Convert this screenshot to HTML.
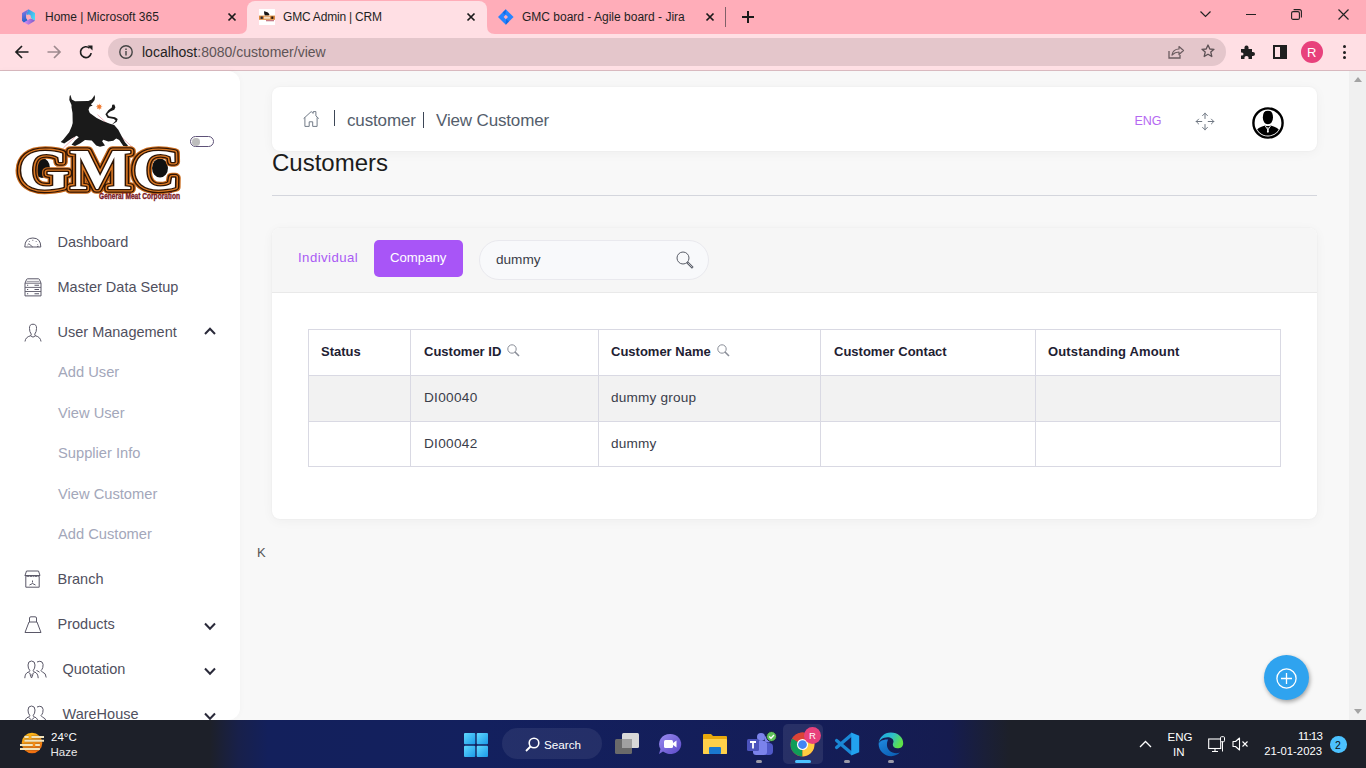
<!DOCTYPE html>
<html><head><meta charset="utf-8">
<style>
*{box-sizing:border-box;margin:0;padding:0}
html,body{width:1366px;height:768px;overflow:hidden;font-family:"Liberation Sans",sans-serif;background:#f8f8f8;position:relative}
.a{position:absolute;line-height:1;white-space:nowrap}
svg{position:absolute;overflow:visible}
#tabs{position:absolute;left:0;top:0;width:1366px;height:34px;background:#ffadb9}
#toolbar{position:absolute;left:0;top:34px;width:1366px;height:36px;background:#ffdfe4}
#tbline{position:absolute;left:0;top:70px;width:1366px;height:1px;background:#d9b9bf}
#omni{position:absolute;left:108px;top:38px;width:1118px;height:28px;border-radius:14px;background:#e4c6cb}
#main{position:absolute;left:0;top:71px;width:1366px;height:649px;background:#f8f8f8}
#sidebar{position:absolute;left:0;top:71px;width:240px;height:649px;background:#fff;border-radius:0 12px 12px 0;box-shadow:0 0 6px rgba(0,0,0,.03)}
#scroll{position:absolute;left:1349px;top:71px;width:17px;height:649px;background:#f0f0f0}
#taskbar{position:absolute;left:0;top:720px;width:1366px;height:48px;background:linear-gradient(90deg,#1d2029 0px,#1d2029 210px,#18204a 238px,#13205c 268px,#13205e 480px,#141d58 800px,#151c50 950px,#1a1f38 985px,#1d2029 1010px,#1d2029 1366px)}
.tabt{font-size:12px;color:#1f1f1f}
.menu{font-size:14.5px;color:#50505e}
.sub{font-size:14.7px;color:#a3a7ba}
.card{position:absolute;background:#fff;border-radius:8px;box-shadow:0 0 2px rgba(0,0,0,.05),0 2px 12px rgba(0,0,0,.045)}
.th{font-size:13px;font-weight:700;color:#1e2132}
.td{font-size:13.6px;color:#3a3d4a}
.tray{font-size:11.5px;color:#fff}
</style></head><body>
<!-- ===== Chrome tab strip ===== -->
<div id="tabs"></div>
<!-- active tab with feet -->
<div style="position:absolute;left:247px;top:1px;width:240px;height:33px;background:#ffdfe4;border-radius:8px 8px 0 0"></div>
<svg style="left:239px;top:26px" width="8" height="8"><path d="M0 8 Q8 8 8 0 L8 8Z" fill="#ffdfe4"/></svg>
<svg style="left:487px;top:26px" width="8" height="8"><path d="M8 8 Q0 8 0 0 L0 8Z" fill="#ffdfe4"/></svg>
<!-- tab 1 -->
<svg style="left:21px;top:9px" width="15" height="16" viewBox="0 0 15 16">
 <defs>
  <linearGradient id="m1" x1="0" y1="0" x2="1" y2="0.6"><stop offset="0" stop-color="#3a7ee0"/><stop offset="1" stop-color="#4ad8f2"/></linearGradient>
  <linearGradient id="m2" x1="0" y1="0" x2="0.3" y2="1"><stop offset="0" stop-color="#9a78e8"/><stop offset="1" stop-color="#1f64c8"/></linearGradient>
  <linearGradient id="m3" x1="0" y1="0" x2="1" y2="0"><stop offset="0" stop-color="#d890f5"/><stop offset="1" stop-color="#7a58c8"/></linearGradient>
 </defs>
 <path d="M7.5 0.3L14 4V11.8L11 10L9 7.5L5 5.2Z" fill="url(#m1)"/>
 <path d="M7.5 0.3L5 5.2L5.5 9.5L7 12L2.8 13.5L1 11.8V4Z" fill="url(#m2)"/>
 <path d="M14 11.8L7.5 15.7L2.8 13.5L6 11.5L9 9.5L11 10Z" fill="url(#m3)"/>
 <circle cx="7.5" cy="8" r="2.4" fill="#ffadb9"/>
</svg>
<div class="a tabt" style="left:45px;top:11px">Home | Microsoft 365</div>
<svg style="left:228px;top:13px" width="8" height="8"><path d="M0.5 0.5L7.5 7.5M7.5 0.5L0.5 7.5" stroke="#1a1a1a" stroke-width="1.7"/></svg>
<!-- tab 2 -->
<svg style="left:259px;top:9px" width="16" height="16" viewBox="0 0 16 16"><rect width="16" height="16" fill="#fff"/><path d="M5 2.2L6.2 2.5L9 3.5L10.5 5.5L9.5 6.5L5.8 6.5L5.2 4.5Z" fill="#151515"/><rect x="0" y="6.6" width="16" height="4.2" fill="#d9893e"/><rect x="1.6" y="7.5" width="2.2" height="2.4" fill="#2a2a30"/><rect x="5" y="7.6" width="6" height="2.2" fill="#f4dcc0"/><rect x="12.3" y="7.5" width="2" height="2.4" fill="#2a1a10"/><rect x="7" y="11.3" width="8" height="0.9" fill="#b04050"/></svg>
<div class="a tabt" style="left:283px;top:11px;letter-spacing:-0.2px">GMC Admin | CRM</div>
<svg style="left:467px;top:13px" width="8" height="8"><path d="M0.5 0.5L7.5 7.5M7.5 0.5L0.5 7.5" stroke="#1a1a1a" stroke-width="1.7"/></svg>
<!-- tab 3 -->
<svg style="left:498px;top:9px" width="16" height="16" viewBox="0 0 16 16"><path d="M7.8 0.2L15.6 8L7.8 15.8L0 8Z" fill="#2684ff"/><path d="M7.8 0.2L4.6 3.4L7.3 6L7.8 2.5Z" fill="#0a5ed8" opacity=".7"/><path d="M7.8 15.8L11 12.6L8.3 10L7.8 13.5Z" fill="#0a5ed8" opacity=".7"/><path d="M7.8 5.8L10 8L7.8 10.2L5.6 8Z" fill="#ffadb9"/></svg>
<div class="a tabt" style="left:522px;top:11px">GMC board - Agile board - Jira</div>
<svg style="left:706px;top:13px" width="8" height="8"><path d="M0.5 0.5L7.5 7.5M7.5 0.5L0.5 7.5" stroke="#1a1a1a" stroke-width="1.7"/></svg>
<div style="position:absolute;left:725px;top:7px;width:1px;height:20px;background:#806068"></div>
<svg style="left:742px;top:11px" width="12" height="12"><path d="M6 0V12M0 6H12" stroke="#1a1a1a" stroke-width="2"/></svg>
<!-- window controls -->
<svg style="left:1200px;top:11px" width="11" height="7"><path d="M0.5 0.5L5.5 5.5L10.5 0.5" stroke="#222" stroke-width="1.2" fill="none"/></svg>
<div style="position:absolute;left:1246px;top:14px;width:10px;height:1.2px;background:#222"></div>
<svg style="left:1291px;top:9px" width="11" height="11"><rect x="0.6" y="2.6" width="7.8" height="7.8" rx="1.5" stroke="#222" stroke-width="1.1" fill="none"/><path d="M2.6 0.6H8.4Q10.4 0.6 10.4 2.6V8.4" stroke="#222" stroke-width="1.1" fill="none"/></svg>
<svg style="left:1338px;top:9px" width="11" height="11"><path d="M0.5 0.5L10.5 10.5M10.5 0.5L0.5 10.5" stroke="#222" stroke-width="1.2"/></svg>

<!-- ===== Toolbar ===== -->
<div id="toolbar"></div>
<div id="tbline"></div>
<svg style="left:15px;top:45px" width="14" height="14"><path d="M13.5 7H1.5M7 1L1 7L7 13" stroke="#1f1f1f" stroke-width="1.7" fill="none"/></svg>
<svg style="left:47px;top:45px" width="14" height="14"><path d="M0.5 7H12.5M7 1L13 7L7 13" stroke="#9e8a8e" stroke-width="1.7" fill="none"/></svg>
<svg style="left:79px;top:45px" width="14" height="14"><path d="M12.2 8.2A5.4 5.4 0 1 1 10.6 3.2" stroke="#1f1f1f" stroke-width="1.7" fill="none"/><path d="M8.5 0.5H13.5V5.5Z" fill="#1f1f1f"/></svg>
<div id="omni"></div>
<svg style="left:119px;top:45px" width="14" height="14"><circle cx="7" cy="7" r="6.2" stroke="#444" stroke-width="1.4" fill="none"/><rect x="6.3" y="6" width="1.4" height="4.5" fill="#444"/><rect x="6.3" y="3.5" width="1.4" height="1.5" fill="#444"/></svg>
<div class="a" style="left:142px;top:45px;font-size:14px;color:#5e5456"><span style="color:#1f1f1f">localhost</span>:8080/customer/view</div>
<svg style="left:1168px;top:45px" width="16" height="14"><path d="M1 6V13H12V10" stroke="#6b5c60" stroke-width="1.3" fill="none"/><path d="M4 10Q5 4 11 4V1.5L15.5 5.5L11 9.5V7Q7 7 4 10Z" stroke="#6b5c60" stroke-width="1.2" fill="none" stroke-linejoin="round"/></svg>
<svg style="left:1201px;top:44px" width="14" height="14" viewBox="0 0 14 14"><path d="M7 1L8.8 5L13 5.3L9.8 8.1L10.8 12.5L7 10.2L3.2 12.5L4.2 8.1L1 5.3L5.2 5Z" stroke="#5c5054" stroke-width="1.3" fill="none" stroke-linejoin="round"/></svg>
<svg style="left:1240px;top:45px" width="15" height="14" viewBox="0 0 15 14"><path d="M1 4H4.5Q4 0.5 6.5 0.5Q9 0.5 8.5 4H12V7Q15 6.5 15 9Q15 11.5 12 11V14H8.5Q9 11 6.5 11Q4 11 4.5 14H1V10.5Q3.5 11 3.5 9Q3.5 7 1 7.5Z" fill="#1f1f1f"/></svg>
<svg style="left:1273px;top:45px" width="14" height="14"><rect x="1" y="1" width="12" height="12" stroke="#1f1f1f" stroke-width="2" fill="none"/><rect x="7" y="1" width="6" height="12" fill="#1f1f1f"/></svg>
<div style="position:absolute;left:1301px;top:41px;width:22px;height:22px;border-radius:11px;background:#e8417c"></div>
<div class="a" style="left:1307px;top:46px;font-size:13px;color:#fff">R</div>
<div style="position:absolute;left:1343px;top:45px;width:3px;height:3px;border-radius:2px;background:#1f1f1f"></div>
<div style="position:absolute;left:1343px;top:51px;width:3px;height:3px;border-radius:2px;background:#1f1f1f"></div>
<div style="position:absolute;left:1343px;top:56px;width:3px;height:3px;border-radius:2px;background:#1f1f1f"></div>

<!-- ===== Page ===== -->
<div id="main"></div>
<div id="scroll"></div>
<svg style="left:1354px;top:77px" width="8" height="5"><path d="M0 5L4 0L8 5Z" fill="#a3a3a3"/></svg>
<svg style="left:1354px;top:709px" width="8" height="5"><path d="M0 0L4 5L8 0Z" fill="#a3a3a3"/></svg>

<!-- sidebar -->
<div id="sidebar"></div>
<!-- logo -->
<svg style="left:0;top:80px" width="240" height="130" viewBox="0 80 240 130">
 <path d="M97.5 114.7L133.3 148M63.3 148L75 137" stroke="#e06a7a" stroke-width="0.5" fill="none"/>
 <path d="M71.5 105 L69.3 100 L69.6 96.5 L70.2 94.8 L70.9 96.5 L71.8 99.5 L75 101.2 L88.3 100.9 L91.6 99.5 L93.6 96.8 L94.3 95 L95 97 L94.6 100 L92.8 102.6 L90.8 104.2 L92.7 105.5 L89.6 106.8 L88.5 109.8 L89.8 113 L96.7 118 L103.3 121.3 L110 123.7 L114.2 125.1 L118.3 129.7 L121.7 136.3 L125 142.2 L127.9 145.5 L127.1 147 L123.3 145.9 L119.2 140.1 L116.2 138.4 L113.3 140.7 L108.3 141.5 L103.3 139.8 L102.1 141.3 L105 145.5 L100 146.8 L96.2 145.5 L91.7 140.5 L85 140.1 L80 143.4 L75 145.9 L71.5 144.8 L75 140.5 L78.8 137.3 L76.7 135.7 L71.7 138.4 L64.2 143.4 L60.7 142 L63.3 139.5 L69.2 132.2 L71.8 126.3 L72.7 123 L72.5 113 L71.5 107.3Z" fill="#1a1a1a"/>
 <path d="M111.7 124.7 L116.7 121.8 L117.7 119 L115 117.2 L108.8 116.3 L107.3 114 L110.2 111.5 L114.3 109.8 L115.4 107.3 L114.3 104.5 L112.2 104.8 L111.8 107.5 L108.3 110.2 L105.4 114.2 L107.5 117.8 L114 119 L115.7 120.7 L112.7 123.7Z" fill="#1a1a1a"/>
 <path d="M102.60 106.80 L100.68 107.41 L101.60 109.20 L99.81 108.28 L99.20 110.20 L98.59 108.28 L96.80 109.20 L97.72 107.41 L95.80 106.80 L97.72 106.19 L96.80 104.40 L98.59 105.32 L99.20 103.40 L99.81 105.32 L101.60 104.40 L100.68 106.19Z" fill="#f07a30"/>
 <ellipse cx="42" cy="168" rx="8" ry="10" fill="#111"/>
 <ellipse cx="160" cy="168" rx="8" ry="9.5" fill="#111"/>
 <path d="M84 188L90 170L93 188ZM108 188L113 170L116 188Z" fill="#111"/>
 <g font-family="Liberation Serif" font-weight="700" font-size="56" stroke-linejoin="round">
  <text x="18" y="189" textLength="162" lengthAdjust="spacingAndGlyphs" fill="none" stroke="#c96a1c" stroke-width="9.6">GMC</text>
  <text x="18" y="189" textLength="162" lengthAdjust="spacingAndGlyphs" fill="none" stroke="#2e1404" stroke-width="7.6">GMC</text>
  <text x="18" y="189" textLength="162" lengthAdjust="spacingAndGlyphs" fill="none" stroke="#dd7a24" stroke-width="5.2">GMC</text>
  <text x="18" y="189" textLength="162" lengthAdjust="spacingAndGlyphs" fill="none" stroke="#2e1404" stroke-width="2.6">GMC</text>
  <text x="18" y="189" textLength="162" lengthAdjust="spacingAndGlyphs" fill="#fff">GMC</text>
 </g>
 <text x="99" y="198.6" font-family="Liberation Sans" font-weight="700" font-size="8.6" textLength="81" lengthAdjust="spacingAndGlyphs" fill="#7a1520" stroke="#7a1520" stroke-width="0.35">General Meat Corporation</text>
</svg>
<!-- toggle -->
<div style="position:absolute;left:190px;top:136px;width:24px;height:11px;border-radius:6px;border:1.3px solid #5e5278;background:#fff"></div>
<div style="position:absolute;left:192px;top:138px;width:7.5px;height:7.5px;border-radius:50%;background:#bdbdbd"></div>
<!-- sidebar icons -->
<svg style="left:24px;top:237px" width="18" height="11" viewBox="0 0 18 11"><path d="M0.8 10H16.8Q16.8 1 8.8 1Q0.8 1 0.8 10Z" stroke="#5a5868" stroke-width="1" fill="none"/><path d="M8.8 10L4.5 6.5M3.5 8L4.5 7.5M5 4L5.6 4.8M8.8 2.8V3.8M12.5 4L12 4.8M14.2 8L13.4 7.6M13 9.5L14.5 9.5" stroke="#5a5868" stroke-width="0.9"/></svg>
<svg style="left:24px;top:278px" width="18" height="19" viewBox="0 0 18 19"><path d="M1 5.2L2.6 1.3Q2.9 0.8 3.8 0.8H14.2Q15.1 0.8 15.4 1.3L17 5.2V17.9H1Z" stroke="#5a5868" stroke-width="1" fill="none"/><path d="M1 5.2H17M1 9.4H17M1 13.5H17" stroke="#5a5868" stroke-width="0.9"/><path d="M2.8 3.4H15.2" stroke="#5a5868" stroke-width="0.6"/><path d="M3 7.3h1.2M3 11.5h1.2M3 15.7h1.2M10.5 7.3h4.5M10.5 11.5h4.5M10.5 15.7h4.5" stroke="#5a5868" stroke-width="1.1"/></svg>
<svg style="left:24px;top:323px" width="18" height="19" viewBox="0 0 18 19"><path d="M9 1.2Q5.2 1.2 5.5 5.5Q5.5 9 7.2 11Q7.5 12 6.5 12.8Q1.5 14 1 18.5M9 1.2Q12.8 1.2 12.5 5.5Q12.5 9 10.8 11Q10.5 12 11.5 12.8Q16.5 14 17 18.5M6.5 12.8Q9 15.5 11.5 12.8" stroke="#5a5868" stroke-width="1" fill="none"/></svg>
<svg style="left:204px;top:327px" width="12" height="8"><path d="M1 7L6 1.8L11 7" stroke="#2a2a3a" stroke-width="2" fill="none"/></svg>
<svg style="left:24px;top:570px" width="17" height="18" viewBox="0 0 17 18"><path d="M1 5.5L2.5 1H14.5L16 5.5Q15 7 13.5 6Q12 7 10.5 6Q9 7 8.5 6Q7 7 5.5 6Q4 7 2.8 6Q1.5 7 1 5.5Z" stroke="#5a5868" stroke-width="1" fill="none"/><path d="M1.8 6.5V17.2H15.2V6.5M1 5.5H16M5.5 15Q8.5 12 11.5 15M8.5 10.5V12.5" stroke="#5a5868" stroke-width="1" fill="none"/></svg>
<svg style="left:24px;top:616px" width="18" height="18" viewBox="0 0 18 18"><path d="M5.5 6V2Q5.5 0.8 7 0.8H11Q12.5 0.8 12.5 2V6M5 6H13L17 16.5H1Z" stroke="#5a5868" stroke-width="1" fill="none" stroke-linejoin="round"/></svg>
<svg style="left:204px;top:622px" width="12" height="9"><path d="M1 1.5L6 6.8L11 1.5" stroke="#2a2a3a" stroke-width="2" fill="none"/></svg>
<svg style="left:24px;top:660px" width="23" height="19" viewBox="0 0 23 19"><path d="M7.5 1Q4 1 4 5Q4 8.5 5.8 10.5Q6 11.5 4.5 12Q1 13 0.8 18.2M7.5 1Q11 1 11 5Q11 8.5 9.2 10.5Q9 11.5 10.5 12Q14 13 14.2 18.2M4.5 12.3L7.5 15L10.5 12.3M6 14.5L7.5 18M9 14.5L7.5 18" stroke="#5a5868" stroke-width="1" fill="none"/><path d="M13 2Q16 0.5 18 2Q19.8 4 18.8 7.5Q18.2 9.5 17 10.5Q17.3 11.5 18.5 12Q22 13 22.2 17.5M12.5 10.5Q14 11 15.5 12.2" stroke="#5a5868" stroke-width="1" fill="none"/></svg>
<svg style="left:204px;top:667px" width="12" height="9"><path d="M1 1.5L6 6.8L11 1.5" stroke="#2a2a3a" stroke-width="2" fill="none"/></svg>
<svg style="left:24px;top:705px" width="23" height="19" viewBox="0 0 23 19"><path d="M7.5 1Q4 1 4 5Q4 8.5 5.8 10.5Q6 11.5 4.5 12Q1 13 0.8 18.2M7.5 1Q11 1 11 5Q11 8.5 9.2 10.5Q9 11.5 10.5 12Q14 13 14.2 18.2M4.5 12.3L7.5 15L10.5 12.3" stroke="#5a5868" stroke-width="1" fill="none"/><path d="M13 2Q16 0.5 18 2Q19.8 4 18.8 7.5Q18.2 9.5 17 10.5Q17.3 11.5 18.5 12Q22 13 22.2 17.5" stroke="#5a5868" stroke-width="1" fill="none"/></svg>
<svg style="left:204px;top:712px" width="12" height="9"><path d="M1 1.5L6 6.8L11 1.5" stroke="#2a2a3a" stroke-width="2" fill="none"/></svg>
<div class="a menu" style="left:57.5px;top:234.7px">Dashboard</div>
<div class="a menu" style="left:57.5px;top:279.7px">Master Data Setup</div>
<div class="a menu" style="left:57.5px;top:324.7px">User Management</div>
<div class="a sub" style="left:58px;top:365.2px">Add User</div>
<div class="a sub" style="left:58px;top:406.4px">View User</div>
<div class="a sub" style="left:58px;top:446.2px">Supplier Info</div>
<div class="a sub" style="left:58px;top:486.6px">View Customer</div>
<div class="a sub" style="left:58px;top:526.6px">Add Customer</div>
<div class="a menu" style="left:57.5px;top:572.1px">Branch</div>
<div class="a menu" style="left:57.5px;top:616.5px">Products</div>
<div class="a menu" style="left:62.5px;top:661.7px">Quotation</div>
<div class="a menu" style="left:62.5px;top:706.7px">WareHouse</div>

<!-- header card -->
<div class="card" style="left:272px;top:87px;width:1045px;height:64px"></div>
<svg style="left:303px;top:111px" width="16" height="16" viewBox="0 0 16 16"><path d="M0.6 7.6L8.2 0.6L10.2 2.4V0.6H12.9V4.9L15.8 7.6M1.9 6.4V15.4H6.2V10.8H9.7V15.4H14.1V6.4" stroke="#737c88" stroke-width="1" fill="none"/></svg>
<div style="position:absolute;left:334px;top:110px;width:1.3px;height:16px;background:#3c4656"></div>
<div class="a" style="left:347px;top:112px;font-size:17px;letter-spacing:-0.15px;color:#545e6c">customer</div>
<div style="position:absolute;left:423px;top:112px;width:1.3px;height:16px;background:#3c4656"></div>
<div class="a" style="left:436px;top:112px;font-size:17px;letter-spacing:-0.15px;color:#545e6c">View Customer</div>
<div class="a" style="left:1134.5px;top:114.5px;font-size:12.5px;color:#b569f2">ENG</div>
<svg style="left:1195px;top:112px" width="20" height="19" viewBox="0 0 20 19"><path d="M10 1.2V6.5M10 12.5V17.8M1.2 9.5H6.8M13.2 9.5H18.8M7.6 3.6L10 1.2L12.4 3.6M7.6 15.4L10 17.8L12.4 15.4M3.6 7.1L1.2 9.5L3.6 11.9M16.4 7.1L18.8 9.5L16.4 11.9" stroke="#6f7782" stroke-width="1" fill="none" stroke-linecap="round" stroke-linejoin="round"/></svg>
<svg style="left:1252px;top:107px" width="32" height="32" viewBox="0 0 32 32"><defs><clipPath id="avc"><circle cx="16" cy="16" r="12.6"/></clipPath></defs><circle cx="16" cy="16" r="14.6" stroke="#000" stroke-width="2.4" fill="#fff"/><g clip-path="url(#avc)"><path d="M10.8 10.5Q10.8 3.6 15.9 3.6Q21 3.6 21 10.5Q21 13.5 19.5 15.5Q18.5 17.3 15.9 17.3Q13.3 17.3 12.3 15.5Q10.8 13.5 10.8 10.5Z" fill="#000"/><path d="M3 30Q3 21.5 9.5 19.8L13 18.6Q15.9 19.6 18.8 18.6L22.3 19.8Q28.8 21.5 28.8 30Z" fill="#000"/><path d="M13 18.6L15.9 22.8L18.8 18.6" stroke="#fff" stroke-width="0.9" fill="none"/><path d="M15.2 20.2H16.6L16.3 21.3L16.9 24.8L15.9 26L14.9 24.8L15.5 21.3Z" fill="#fff"/></g></svg>
<div class="a" style="left:272px;top:150.8px;font-size:24px;color:#1c1c1c">Customers</div>
<div style="position:absolute;left:272px;top:195px;width:1045px;height:1px;background:#d4d6dd"></div>

<!-- list card -->
<div class="card" style="left:272px;top:228px;width:1045px;height:291px;overflow:hidden">
  <div style="position:absolute;left:0;top:0;width:1045px;height:65px;background:#f6f6f6;border-bottom:1px solid #e9e9e9"></div>
</div>
<div class="a" style="left:298px;top:251px;font-size:13.2px;letter-spacing:0.45px;color:#a95af4">Individual</div>
<div style="position:absolute;left:374px;top:240px;width:89px;height:37px;border-radius:5px;background:#a855f7"></div>
<div class="a" style="left:390px;top:251px;font-size:13.2px;color:#fff">Company</div>
<div style="position:absolute;left:479px;top:240px;width:230px;height:40px;border-radius:20px;background:#f8f9fb;border:1px solid #e9e9ee"></div>
<div class="a" style="left:496px;top:253px;font-size:13.6px;color:#3a3d48">dummy</div>
<svg style="left:676px;top:251px" width="18" height="18" viewBox="0 0 18 18"><circle cx="7" cy="7" r="6" stroke="#5a5e68" stroke-width="1" fill="none"/><path d="M11.3 11.3L16.8 16.8" stroke="#5a5e68" stroke-width="2.4"/><path d="M12 12L16.2 16.2" stroke="#d4d6dc" stroke-width="0.8"/></svg>

<!-- table -->
<div style="position:absolute;left:308px;top:329px;width:973px;height:138px;border:1px solid #d9d9e3;background:#fff"></div>
<div style="position:absolute;left:309px;top:376px;width:971px;height:45px;background:#f2f2f2"></div>
<div style="position:absolute;left:309px;top:375px;width:971px;height:1px;background:#d9d9e3"></div>
<div style="position:absolute;left:309px;top:421px;width:971px;height:1px;background:#d9d9e3"></div>
<div style="position:absolute;left:410px;top:330px;width:1px;height:136px;background:#d9d9e3"></div>
<div style="position:absolute;left:598px;top:330px;width:1px;height:136px;background:#d9d9e3"></div>
<div style="position:absolute;left:820px;top:330px;width:1px;height:136px;background:#d9d9e3"></div>
<div style="position:absolute;left:1035px;top:330px;width:1px;height:136px;background:#d9d9e3"></div>
<div class="a th" style="left:321px;top:345px">Status</div>
<div class="a th" style="left:424px;top:345px">Customer ID</div>
<svg style="left:507px;top:344px" width="13" height="13" viewBox="0 0 13 13"><circle cx="5" cy="5" r="4.2" stroke="#8a8e98" stroke-width="1" fill="none"/><path d="M8 8L12 12" stroke="#8a8e98" stroke-width="1.6"/></svg>
<div class="a th" style="left:611px;top:345px">Customer Name</div>
<svg style="left:717px;top:344px" width="13" height="13" viewBox="0 0 13 13"><circle cx="5" cy="5" r="4.2" stroke="#8a8e98" stroke-width="1" fill="none"/><path d="M8 8L12 12" stroke="#8a8e98" stroke-width="1.6"/></svg>
<div class="a th" style="left:834px;top:345px">Customer Contact</div>
<div class="a th" style="left:1048px;top:345px;letter-spacing:0.15px">Outstanding Amount</div>
<div class="a td" style="left:424px;top:391px;letter-spacing:0.3px">DI00040</div>
<div class="a td" style="left:611px;top:391px;letter-spacing:0.2px">dummy group</div>
<div class="a td" style="left:424px;top:437px;letter-spacing:0.3px">DI00042</div>
<div class="a td" style="left:611px;top:437px;letter-spacing:0.2px">dummy</div>

<div class="a" style="left:257px;top:546px;font-size:13px;color:#555">K</div>

<!-- FAB -->
<div style="position:absolute;left:1264px;top:655px;width:45px;height:45px;border-radius:50%;background:#2fa3ef;box-shadow:1px 2px 4px rgba(0,0,0,.35)"></div>
<svg style="left:1276px;top:667.5px" width="21" height="21" viewBox="0 0 21 21"><circle cx="10.5" cy="10.5" r="9.6" stroke="#fff" stroke-width="1.3" fill="none"/><path d="M10.5 5V16M5 10.5H16" stroke="#fff" stroke-width="1.3"/></svg>

<!-- taskbar -->
<div id="taskbar"></div>
<!-- weather -->
<svg style="left:19px;top:731px" width="27" height="24" viewBox="19 731 27 24">
 <defs><linearGradient id="sun" x1="0" y1="0" x2="0.4" y2="1"><stop offset="0" stop-color="#ffc61a"/><stop offset="1" stop-color="#f27010"/></linearGradient></defs>
 <circle cx="32" cy="743" r="10.3" fill="url(#sun)"/>
 <path d="M24.4 737H28.7M31.4 737H44M24.4 740.8H44M20 744.9H32.8M35.2 744.9H39.9M20 748.9H39.9" stroke="#1d2029" stroke-width="3" opacity=".3"/>
 <path d="M24.4 737H28.7M31.4 737H44M24.4 740.8H44M20 744.9H32.8M35.2 744.9H39.9M20 748.9H39.9" stroke="#f3e4bc" stroke-width="2"/>
</svg>
<div class="a tray" style="left:51px;top:732px;font-size:11.5px">24°C</div>
<div class="a tray" style="left:50.5px;top:747px;font-size:11.5px;color:#e8e8e8">Haze</div>
<!-- start -->
<svg style="left:464px;top:733px" width="24" height="24" viewBox="0 0 24 24">
 <defs><linearGradient id="win" x1="0" y1="0" x2="1" y2="1"><stop offset="0" stop-color="#60d8ff"/><stop offset="1" stop-color="#1a9ae8"/></linearGradient></defs>
 <rect x="0" y="0" width="11.3" height="11.3" rx="1" fill="url(#win)"/><rect x="12.7" y="0" width="11.3" height="11.3" rx="1" fill="url(#win)"/><rect x="0" y="12.7" width="11.3" height="11.3" rx="1" fill="url(#win)"/><rect x="12.7" y="12.7" width="11.3" height="11.3" rx="1" fill="url(#win)"/>
</svg>
<div style="position:absolute;left:502px;top:728px;width:100px;height:31px;border-radius:16px;background:rgba(255,255,255,0.075)"></div>
<svg style="left:525px;top:737px" width="15" height="15" viewBox="0 0 15 15"><circle cx="9" cy="6" r="4.8" stroke="#fff" stroke-width="1.6" fill="none"/><path d="M5.5 9.5L1 14" stroke="#fff" stroke-width="1.8"/></svg>
<div class="a tray" style="left:544px;top:738.5px;font-size:11.7px">Search</div>
<!-- task view -->
<svg style="left:614px;top:733px" width="26" height="22" viewBox="0 0 26 22"><rect x="8" y="0" width="17" height="15" rx="1.5" fill="#d8d8d8"/><rect x="1" y="6" width="17" height="15" rx="1.5" fill="#6a6a6a"/><rect x="8" y="6" width="10" height="9" fill="#a0a0a0"/></svg>
<!-- teams meet -->
<svg style="left:658px;top:733px" width="24" height="22" viewBox="0 0 24 22"><defs><linearGradient id="tm" x1="0" y1="0" x2="1" y2="1"><stop offset="0" stop-color="#9a8cf0"/><stop offset="1" stop-color="#5a48c8"/></linearGradient></defs><path d="M12 1A11 10 0 1 1 5 18.5L1 21L2.5 16A11 10 0 0 1 12 1Z" fill="url(#tm)"/><rect x="6" y="7" width="9" height="8" rx="1.5" fill="#fff"/><path d="M15 10L18.5 7.5V14.5L15 12Z" fill="#fff"/></svg>
<!-- explorer -->
<svg style="left:702px;top:733px" width="26" height="22" viewBox="0 0 26 22"><path d="M1 2Q1 1 2 1H9L11 3H24Q25 3 25 4V20Q25 21 24 21H2Q1 21 1 20Z" fill="#e8a80c"/><rect x="1" y="6" width="24" height="15" rx="1" fill="#ffd04a"/><rect x="7" y="14" width="12" height="7" rx="1" fill="#1a78d0"/></svg>
<!-- teams -->
<svg style="left:746px;top:731px" width="32" height="26" viewBox="0 0 32 26"><circle cx="22" cy="8" r="3.5" fill="#7b83eb"/><rect x="17" y="12" width="10" height="12" rx="4" fill="#5059c9"/><circle cx="15" cy="6" r="4" fill="#7b83eb"/><rect x="7" y="10" width="14" height="14" rx="3" fill="#7b83eb"/><rect x="1" y="8" width="12" height="12" rx="1.5" fill="#4b53bc"/><path d="M4 11H10M7 11V17.5" stroke="#fff" stroke-width="1.8"/><circle cx="25.5" cy="5.5" r="5" fill="#5fc35a" stroke="#1a1f40" stroke-width="1"/><path d="M23.2 5.5L25 7.3L28 4" stroke="#fff" stroke-width="1.3" fill="none"/></svg>
<div style="position:absolute;left:756px;top:760px;width:6px;height:3px;border-radius:2px;background:#9a9aa8"></div>
<!-- chrome active -->
<div style="position:absolute;left:783px;top:724px;width:40px;height:40px;border-radius:5px;background:rgba(255,255,255,0.085)"></div>
<svg style="left:790px;top:732px" width="25" height="25" viewBox="0 0 24 24"><circle cx="12" cy="12" r="11.5" fill="#db4437"/><path d="M12 12L2.05 6.25A11.5 11.5 0 0 0 12 23.5Z" fill="#0f9d58"/><path d="M12 12L12 23.5A11.5 11.5 0 0 0 21.95 6.25Z" fill="#ffcd40"/><path d="M12 12L21.95 6.25A11.5 11.5 0 0 0 2.05 6.25Z" fill="#db4437"/><circle cx="12" cy="12" r="5.3" fill="#fff"/><circle cx="12" cy="12" r="4.2" fill="#4285f4"/></svg>
<div style="position:absolute;left:804px;top:727px;width:17px;height:17px;border-radius:50%;background:#e8417c"></div>
<div class="a" style="left:809px;top:730.5px;font-size:9.5px;color:#fff">R</div>
<div style="position:absolute;left:795px;top:760px;width:16px;height:3px;border-radius:2px;background:#4cc2ff"></div>
<!-- vscode -->
<svg style="left:834px;top:732px" width="26" height="24" viewBox="0 0 26 24"><path d="M2.6 8.6L17.5 21.2M2.6 15.4L17.5 2.8" stroke="#1a88d6" stroke-width="3.3" stroke-linecap="round"/><path d="M17.2 0.6L25.2 3.8V20.2L17.2 23.4Z" fill="#22a2ee"/></svg>
<div style="position:absolute;left:844px;top:760px;width:6px;height:3px;border-radius:2px;background:#9a9aa8"></div>
<!-- edge -->
<svg style="left:878px;top:732px" width="26" height="25" viewBox="0 0 26 25"><defs><linearGradient id="ed" x1="0" y1="0" x2="1" y2="0.4"><stop offset="0" stop-color="#1aa0e8"/><stop offset=".55" stop-color="#2ec0c8"/><stop offset="1" stop-color="#5ee04a"/></linearGradient><linearGradient id="ed2" x1="0" y1="0" x2="0.6" y2="1"><stop offset="0" stop-color="#1f8ae0"/><stop offset="1" stop-color="#0d62b8"/></linearGradient></defs>
<path d="M12.8 0.6C20 0.6 25.2 5.5 25.2 11.2C25.2 14.8 22.5 16.3 19.5 16.3C16.5 16.3 14.8 15 14.8 12.6C14.8 11.2 15.5 10.5 15.5 9.5C15.5 7 13 5.2 9.5 5.2C5 5.2 1.3 8 0.6 11.5C1.2 5.3 6.3 0.6 12.8 0.6Z" fill="url(#ed)"/>
<path d="M0.6 11.8C0.6 18.8 6.2 24.2 13.2 24.2C16.8 24.2 19.8 22.6 21.8 20.6C18.5 21.8 14 21.2 11.3 18.6C8.5 15.8 8.3 11 10.2 7.6C5.5 7 1.2 9.5 0.6 11.8Z" fill="url(#ed2)"/></svg>
<div style="position:absolute;left:888px;top:760px;width:6px;height:3px;border-radius:2px;background:#9a9aa8"></div>
<!-- tray -->
<svg style="left:1139px;top:740px" width="13" height="8"><path d="M1 7L6.5 1.5L12 7" stroke="#fff" stroke-width="1.3" fill="none"/></svg>
<div class="a tray" style="left:1167.5px;top:731.5px;font-size:11.5px">ENG</div>
<div class="a tray" style="left:1173px;top:746.5px;font-size:11.5px">IN</div>
<svg style="left:1208px;top:736px" width="18" height="17" viewBox="0 0 18 17"><rect x="0.7" y="3" width="12" height="9.5" stroke="#fff" stroke-width="1.1" fill="none"/><path d="M4 15.5H10M7 12.5V15.5" stroke="#fff" stroke-width="1.1"/><rect x="12.5" y="0.7" width="4" height="5" rx="1" stroke="#fff" stroke-width="1" fill="#1d2029"/><path d="M14.5 5.7V15.5" stroke="#fff" stroke-width="1"/></svg>
<svg style="left:1232px;top:737px" width="17" height="14" viewBox="0 0 17 14"><path d="M1 4.5H3.5L7.5 1V13L3.5 9.5H1Z" stroke="#fff" stroke-width="1.1" fill="none" stroke-linejoin="round"/><path d="M10.5 4.5L15.5 9.5M15.5 4.5L10.5 9.5" stroke="#fff" stroke-width="1.1"/></svg>
<div class="a tray" style="right:44px;top:730.5px;font-size:11.5px;text-align:right;letter-spacing:-0.8px">11:13</div>
<div class="a tray" style="right:44px;top:746px;font-size:11.3px;text-align:right">21-01-2023</div>
<div style="position:absolute;left:1330px;top:736px;width:16.5px;height:16.5px;border-radius:50%;background:#4cc2ff"></div>
<div class="a" style="left:1335px;top:739.5px;font-size:10.5px;color:#111">2</div>
</body></html>
